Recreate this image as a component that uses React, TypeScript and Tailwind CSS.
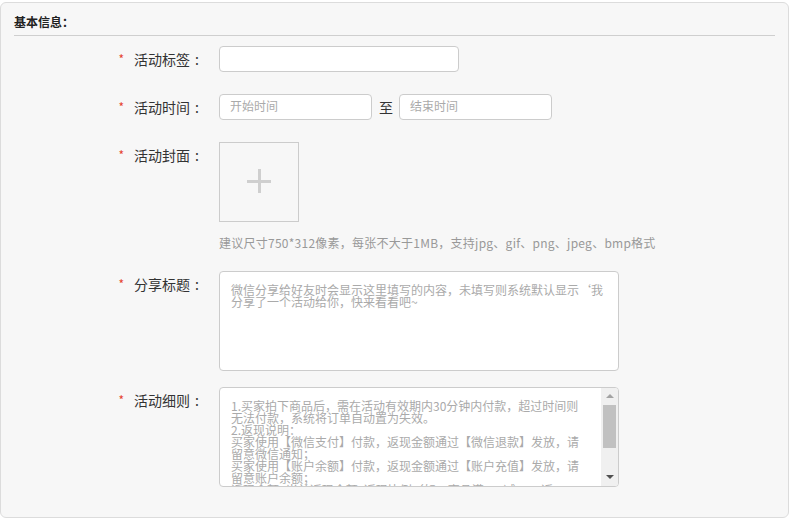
const FONT = "font-['Noto_Sans_CJK_SC','Noto_Sans',sans-serif]";

function Label({ text }: { text: string }) {
  return (
    <div className="flex h-[26px] w-[190px] shrink-0 items-center justify-end text-[14px] text-[#333]">
      <span className="mr-[10px] text-[12px] text-[#e5432f]">*</span>
      <span>{text}</span>
      <span className="inline-block w-[14px] text-center">:</span>
    </div>
  );
}

const shareLines = [
  "微信分享给好友时会显示这里填写的内容，未填写则系统默认显示‘我",
  "分享了一个活动给你，快来看看吧~",
];

const ruleLines = [
  "1.买家拍下商品后，需在活动有效期内30分钟内付款，超过时间则",
  "无法付款，系统将订单自动置为失效。",
  "2.返现说明：",
  "买家使用【微信支付】付款，返现金额通过【微信退款】发放，请",
  "留意微信通知；",
  "买家使用【账户余额】付款，返现金额通过【账户充值】发放，请",
  "留意账户余额；",
  "返现金额=当前返现金额x返现比例（如：商品满100减20，返",
];

export default function App() {
  return (
    <div className={`${FONT} bg-white pt-[2px]`}>
      <div className="h-[516px] w-[789px] rounded-[6px] border border-[#dcdcdc] bg-[#f7f7f7] px-[13px]">
        <div className="border-b border-[#cfcfcf] pb-[6px] pt-[12px] text-[12px] font-bold leading-[14px] text-[#222]">
          基本信息：
        </div>

        <div className="mt-[10px] flex">
          <Label text="活动标签" />
          <div className="ml-[15px] h-[26px] w-[240px] rounded-[4px] border border-[#cccccc] bg-white" />
        </div>

        <div className="mt-[22px] flex">
          <Label text="活动时间" />
          <div className="ml-[15px] flex items-center">
            <div className="flex h-[26px] w-[153px] items-center rounded-[4px] border border-[#cccccc] bg-white pl-[10px] pb-[3px] text-[12px] text-[#aaa]">
              开始时间
            </div>
            <span className="ml-[7px] mr-[6px] text-[14px] text-[#333]">至</span>
            <div className="flex h-[26px] w-[153px] items-center rounded-[4px] border border-[#cccccc] bg-white pl-[10px] pb-[3px] text-[12px] text-[#aaa]">
              结束时间
            </div>
          </div>
        </div>

        <div className="mt-[22px] flex">
          <Label text="活动封面" />
          <div className="ml-[15px]">
            <div className="relative h-[80px] w-[80px] border border-[#cccccc]">
              <div className="absolute left-[27px] top-[37px] h-[3px] w-[24px] bg-[#cfcfcf]" />
              <div className="absolute left-[38px] top-[26px] h-[24px] w-[3px] bg-[#cfcfcf]" />
            </div>
            <div className="mt-[14px] whitespace-nowrap text-[12px] leading-[14px] tracking-[0.25px] text-[#999]">
              建议尺寸750*312像素，每张不大于1MB，支持jpg、gif、png、jpeg、bmp格式
            </div>
          </div>
        </div>

        <div className="mt-[21px] flex">
          <Label text="分享标题" />
          <div className="ml-[15px] h-[100px] w-[400px] rounded-[4px] border border-[#cccccc] bg-white pl-[11px] pt-[12px] text-[12px] leading-[12px] text-[#aaa]">
            {shareLines.map((l) => (
              <div key={l} className="whitespace-nowrap">
                {l}
              </div>
            ))}
          </div>
        </div>

        <div className="mt-[16px] flex">
          <Label text="活动细则" />
          <div className="ml-[15px] flex h-[100px] w-[400px] overflow-hidden rounded-[4px] border border-[#cccccc] bg-white">
            <div className="flex-1 overflow-hidden pl-[11px] pt-[12px] text-[12px] leading-[12px] text-[#aaa]">
              {ruleLines.map((l) => (
                <div key={l} className="whitespace-nowrap">
                  {l}
                </div>
              ))}
            </div>
            <div className="relative w-[17px] shrink-0 bg-[#f0f0f0]">
              <div className="absolute left-[5px] top-[6px] h-0 w-0 border-x-[4px] border-b-[4px] border-x-transparent border-b-[#a3a3a3]" />
              <div className="absolute left-[2px] top-[17px] h-[43px] w-[13px] bg-[#c1c1c1]" />
              <div className="absolute bottom-[7px] left-[5px] h-0 w-0 border-x-[4px] border-t-[4px] border-x-transparent border-t-[#505050]" />
            </div>
          </div>
        </div>
      </div>
    </div>
  );
}
